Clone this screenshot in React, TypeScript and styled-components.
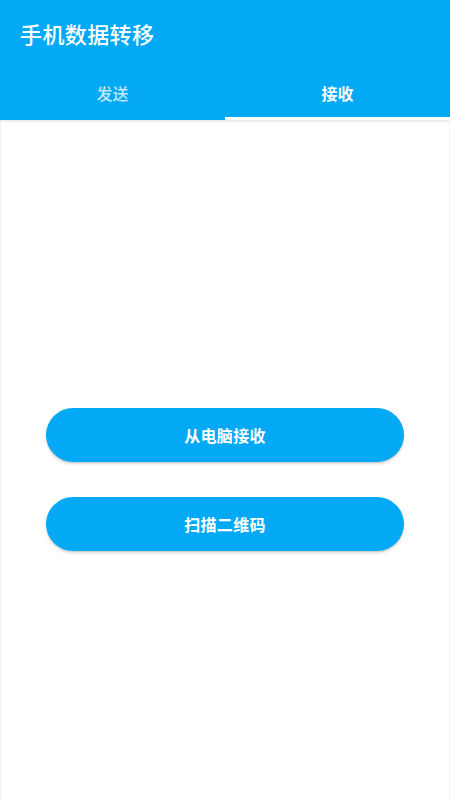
import React, { useState } from "react";
import styled, { createGlobalStyle } from "styled-components";

const GlobalStyle = createGlobalStyle`
  html, body {
    margin: 0;
    padding: 0;
    background: #ffffff;
  }
  body {
    font-family: Roboto, "Noto Sans CJK SC", "Noto Sans", sans-serif;
  }
  * { box-sizing: border-box; }
`;

const Page = styled.div`
  width: 450px;
  height: 800px;
  display: flex;
  flex-direction: column;
  background: #ffffff;
  border-left: 1px solid #f1f1f1;
  border-right: 1px solid #f1f1f1;
`;

const Header = styled.header`
  background: #03a9f4;
  display: flex;
  flex-direction: column;
  box-shadow: 0 1px 3px rgba(0, 0, 0, 0.12);
  margin: 0 -1px;
  position: relative;
  z-index: 1;
`;

const Toolbar = styled.div`
  height: 70px;
  display: flex;
  align-items: center;
  padding: 0 20px 5px;
`;

const Title = styled.h1`
  margin: 0;
  color: #ffffff;
  font-size: 22px;
  font-weight: 500;
  letter-spacing: 0.4px;
  font-family: "Noto Sans CJK SC", sans-serif;
`;

const TabBar = styled.div`
  height: 50px;
  display: grid;
  grid-template-columns: 1fr 1fr;
`;

const Tab = styled.button<{ $active: boolean }>`
  border: none;
  background: transparent;
  padding: 0 0 1px;
  margin: 0;
  cursor: pointer;
  font-family: "Noto Sans CJK SC", sans-serif;
  font-size: 16px;
  font-weight: ${(p) => (p.$active ? 700 : 500)};
  color: ${(p) => (p.$active ? "#ffffff" : "rgba(255, 255, 255, 0.75)")};
  border-bottom: 3px solid ${(p) => (p.$active ? "#ffffff" : "transparent")};
  display: flex;
  align-items: center;
  justify-content: center;
`;

const Body = styled.main`
  flex: 1;
  display: flex;
  flex-direction: column;
  align-items: center;
  gap: 35px;
  padding: 288px 45px 0 45px;
`;

const ActionButton = styled.button`
  width: 358px;
  height: 54px;
  border: none;
  border-radius: 27px;
  background: #03a9f4;
  color: #ffffff;
  font-family: "Noto Sans CJK SC", sans-serif;
  font-size: 16px;
  font-weight: 700;
  letter-spacing: 0.3px;
  box-shadow: 0 2px 3px rgba(0, 0, 0, 0.16), 0 1px 1px rgba(0, 0, 0, 0.06);
  cursor: pointer;
  display: flex;
  align-items: center;
  justify-content: center;
`;

export default function App() {
  const [tab, setTab] = useState(1);
  const tabs = ["发送", "接收"];
  return (
    <>
      <GlobalStyle />
      <Page>
        <Header>
          <Toolbar>
            <Title>手机数据转移</Title>
          </Toolbar>
          <TabBar>
            {tabs.map((t, i) => (
              <Tab key={t} $active={tab === i} onClick={() => setTab(i)}>
                {t}
              </Tab>
            ))}
          </TabBar>
        </Header>
        <Body>
          <ActionButton>从电脑接收</ActionButton>
          <ActionButton>扫描二维码</ActionButton>
        </Body>
      </Page>
    </>
  );
}
